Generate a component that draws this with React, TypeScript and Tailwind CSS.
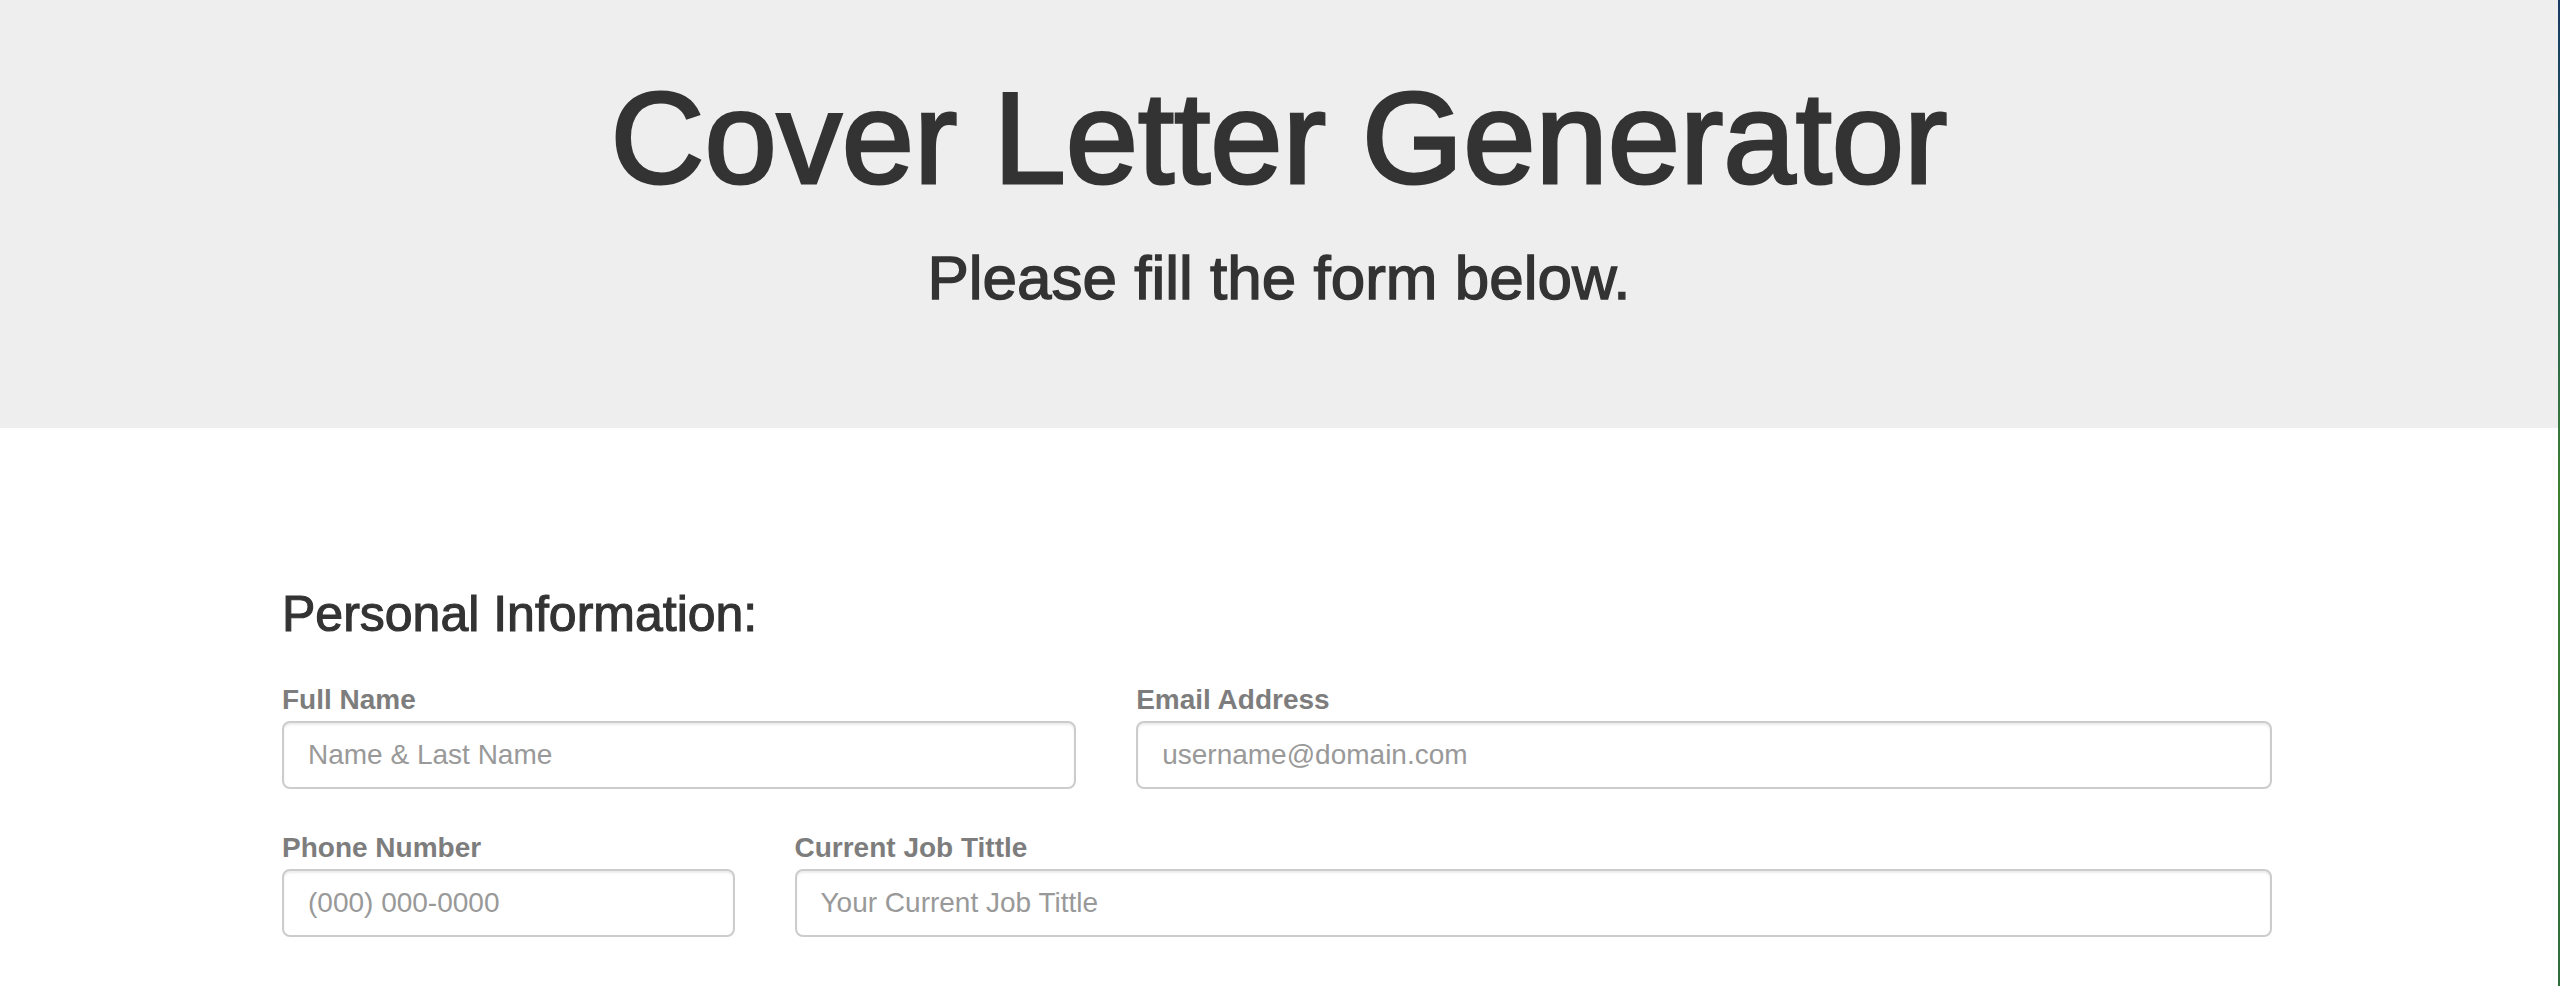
import React from 'react';

type Field = {
  label: string;
  placeholder: string;
  span: string;
  type?: string;
};

const rows: Field[][] = [
  [
    { label: 'Full Name', placeholder: 'Name & Last Name', span: 'col-span-5' },
    { label: 'Email Address', placeholder: 'username@domain.com', span: 'col-span-7', type: 'email' },
  ],
  [
    { label: 'Phone Number', placeholder: '(000) 000-0000', span: 'col-span-3', type: 'tel' },
    { label: 'Current Job Tittle', placeholder: 'Your Current Job Tittle', span: 'col-span-9' },
  ],
];

export default function App() {
  return (
    <div className="flex min-h-screen w-full bg-white font-['Liberation_Sans',Arial,sans-serif] text-[#333333]">
      <main className="flex-1">
        {/* jumbotron */}
        <header className="bg-[#eeeeee] pt-[67px] pb-[116px] text-center">
          {/* headings are medium weight in the original, so thicken the regular face a little */}
          <h1 className="text-[130px] leading-[1.1] font-normal [-webkit-text-stroke:3px_#333333]">
            Cover Letter Generator
          </h1>
          <h2 className="mt-[34px] text-[62px] leading-[1.1] font-normal [-webkit-text-stroke:1.4px_#333333]">
            Please fill the form below.
          </h2>
        </header>

        <section className="ml-[282px] w-[1990px] pt-[159px]">
          <h3 className="text-[50px] leading-[1.1] font-normal [-webkit-text-stroke:1.1px_#333333]">
            Personal Information:
          </h3>
          <form className="mt-[38px] grid grid-cols-12 gap-x-[60px] gap-y-[39px]">
            {rows.flat().map((f) => (
              <div key={f.label} className={f.span}>
                <label className="mb-[1px] block text-[28px] leading-[40px] font-bold text-[#7d7d7d]">
                  {f.label}
                </label>
                <input
                  type={f.type ?? 'text'}
                  placeholder={f.placeholder}
                  className="block h-[68px] w-full rounded-[8px] border-2 border-[#cccccc] bg-white px-[24px] text-[28px] text-[#555555] shadow-[inset_0_2px_2px_rgba(0,0,0,0.075)] outline-none placeholder:text-[#999999]"
                />
              </div>
            ))}
          </form>
        </section>
      </main>
      {/* sliver of desktop wallpaper at the right edge */}
      <div className="w-[2px] shrink-0 bg-linear-to-b from-[#173a63] via-[#3c7f2f] to-[#2f6d3c]" />
    </div>
  );
}
